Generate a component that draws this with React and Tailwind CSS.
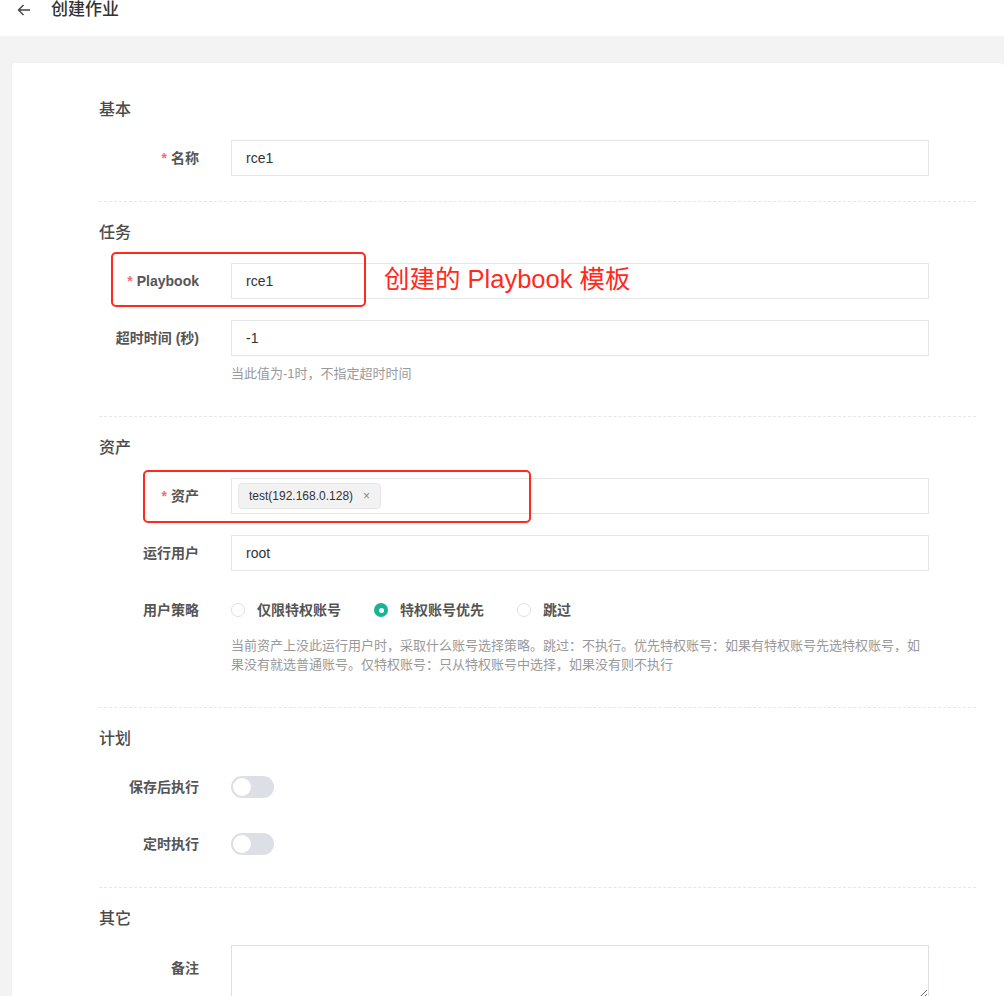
import { useState } from "react";

const font = { fontFamily: '"Liberation Sans", "Noto Sans CJK SC", sans-serif' };

const Section = ({ title, children, last }) => (
  <div>
    <div className="h-[22px] leading-[22px] text-[16px] font-medium text-[#4a4a4a]">{title}</div>
    <div className="mt-[19px] flex flex-col gap-[21px]">{children}</div>
    {!last && <div className="mt-[25px] mb-[20px] border-t border-dashed border-[#e7e7e7]" />}
  </div>
);

const Row = ({ label, required, children, help, className = "" }) => (
  <div className={"relative " + className}>
    <div className="flex items-center min-h-[36px]">
      <div className="w-[100px] shrink-0 text-right text-[14px] font-semibold text-[#555]">
        {required && <span className="text-[#f56c6c] mr-1">*</span>}
        {label}
      </div>
      <div className="ml-8 w-[698px]">{children}</div>
    </div>
    {help && (
      <div className="ml-[132px] w-[698px] mt-[8px] mb-[8px] text-[13px] leading-[19px] text-[#999]">{help}</div>
    )}
  </div>
);

const Input = ({ value }) => (
  <div className="h-9 border border-[#e5e6e7] bg-white px-[14px] flex items-center text-[14px] text-[#333]">
    {value}
  </div>
);

const Toggle = () => (
  <div className="w-[43px] h-[22px] rounded-full bg-[#dcdfe6] p-[2px]">
    <div className="w-[18px] h-[18px] rounded-full bg-white" />
  </div>
);

const Radio = ({ checked, label }) => (
  <label className="flex items-center">
    {checked ? (
      <span className="w-[14px] h-[14px] rounded-full bg-[#1ab394] flex items-center justify-center">
        <span className="w-[5px] h-[5px] rounded-full bg-white" />
      </span>
    ) : (
      <span className="w-[14px] h-[14px] rounded-full border border-[#dcdfe6] bg-white" />
    )}
    <span className="ml-3 text-[14px] font-semibold text-[#555]">{label}</span>
  </label>
);

export default function App() {
  const [policy] = useState("priority");
  return (
    <div style={font} className="w-[1004px] h-[996px] overflow-hidden bg-[#f3f3f4]">
      <div className="h-9 bg-white">
        <div className="h-5 flex items-center">
          <svg className="ml-4" width="16" height="16" viewBox="0 0 16 16" fill="none" stroke="#444" strokeWidth="1.4">
            <path d="M14 8H2.5M7.5 3L2.5 8l5 5" />
          </svg>
          <span className="ml-[19px] text-[17px] font-medium text-[#333]">创建作业</span>
        </div>
      </div>
      <div className="pl-3 pt-[27px]">
        <div className="bg-white rounded-sm shadow-[0_0_2px_rgba(0,0,0,0.06)] pl-[87px] pr-[28px] pt-[36px] pb-10">
          <Section title="基本">
            <Row label="名称" required>
              <Input value="rce1" />
            </Row>
          </Section>

          <Section title="任务">
            <Row label="Playbook" required>
              <Input value="rce1" />
              <div className="absolute left-3 -top-[11px] w-[255px] h-[55px] border-2 border-[#ff2a1c] rounded-[5px]" />
              <div className="absolute left-[285px] top-[1px] leading-[30px] text-[25.5px] text-[#ff2a1c] whitespace-nowrap">
                创建的 Playbook 模板
              </div>
            </Row>
            <Row label="超时时间 (秒)" help="当此值为-1时，不指定超时时间">
              <Input value="-1" />
            </Row>
          </Section>

          <Section title="资产">
            <Row label="资产" required>
              <div className="h-9 border border-[#e5e6e7] bg-white px-[6px] flex items-center">
                <span className="h-[26px] px-[10px] flex items-center rounded bg-[#f2f2f3] border border-[#e6e6e8] text-[12px] text-[#333]">
                  test(192.168.0.128)
                  <span className="ml-[10px] text-[12px] text-[#888]">×</span>
                </span>
              </div>
              <div className="absolute left-[44px] -top-[8px] w-[388px] h-[53px] border-2 border-[#ff2a1c] rounded-[5px]" />
            </Row>
            <Row label="运行用户">
              <Input value="root" />
            </Row>
            <Row
              label="用户策略"
              help="当前资产上没此运行用户时，采取什么账号选择策略。跳过：不执行。优先特权账号：如果有特权账号先选特权账号，如果没有就选普通账号。仅特权账号：只从特权账号中选择，如果没有则不执行"
            >
              <div className="flex items-center gap-[33px]">
                <Radio label="仅限特权账号" checked={policy === "privileged"} />
                <Radio label="特权账号优先" checked={policy === "priority"} />
                <Radio label="跳过" checked={policy === "skip"} />
              </div>
            </Row>
          </Section>

          <Section title="计划">
            <Row label="保存后执行">
              <Toggle />
            </Row>
            <Row label="定时执行">
              <Toggle />
            </Row>
          </Section>

          <div>
            <div className="h-[22px] leading-[22px] text-[16px] font-medium text-[#4a4a4a]">其它</div>
            <div className="mt-[15px] flex">
              <div className="w-[100px] shrink-0 text-right text-[14px] font-semibold text-[#555] pt-[13px]">备注</div>
              <textarea className="ml-8 w-[698px] h-[54px] border border-[#dcdfe6] outline-none" />
            </div>
          </div>
        </div>
      </div>
    </div>
  );
}
